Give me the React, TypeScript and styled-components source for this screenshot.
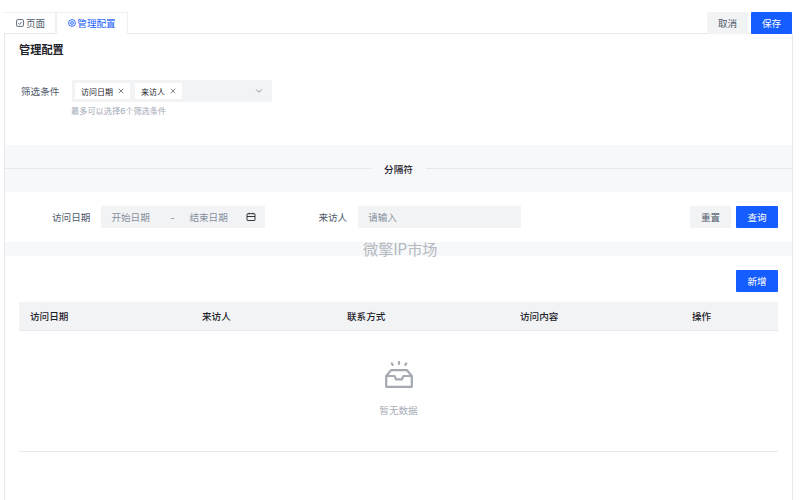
import React from "react";
import styled, { createGlobalStyle } from "styled-components";
import { ChevronDown, X } from "lucide-react";

const GlobalStyle = createGlobalStyle`
  html, body {
    margin: 0;
    padding: 0;
    background: #fff;
  }
  body {
    font-family: "Inter", "Noto Sans CJK SC", sans-serif;
    font-size: 9.6px;
    color: #1d2129;
  }
  * {
    box-sizing: border-box;
  }
`;

const PageWrapper = styled.div`
  position: relative;
  width: 799px;
  height: 500px;
  padding: 12px 6px 0 4px;
  overflow: hidden;
`;

const TopBar = styled.div`
  display: flex;
  justify-content: space-between;
  height: 22px;
  border-bottom: 1px solid #e5e8ef;
`;

const Tabs = styled.div`
  display: flex;
`;

const Tab = styled.div<{ $active?: boolean; $width: number }>`
  display: flex;
  align-items: center;
  justify-content: center;
  gap: ${({ $active }) => ($active ? "1px" : "2px")};
  width: ${({ $width }) => $width}px;
  height: ${({ $active }) => ($active ? "22px" : "21px")};
  padding: 0 0 ${({ $active }) => ($active ? "2px" : "1px")}
    ${({ $active }) => ($active ? "0" : "2px")};
  color: ${({ $active }) => ($active ? "#165dff" : "#4e5969")};
  background: #fff;
  border: 1px solid #eef0f4;
  border-left: ${({ $active }) => ($active ? "1px solid #eef0f4" : "none")};
  border-bottom: none;
`;

const TopActions = styled.div`
  display: flex;
  gap: 3px;
  margin-right: 1px;
`;

const Button = styled.button<{ $primary?: boolean; $width?: number }>`
  width: ${({ $width }) => $width ?? 42}px;
  height: 22px;
  padding: 0 0 1px;
  border: none;
  border-radius: 1px;
  font-family: inherit;
  font-size: 9.6px;
  color: ${({ $primary }) => ($primary ? "#fff" : "#4e5969")};
  background: ${({ $primary }) => ($primary ? "#165dff" : "#f2f3f5")};
`;

const Panel = styled.div`
  height: 467px;
  border-left: 1px solid #e5e8ef;
  border-right: 1px solid #e5e8ef;
`;

const ConfigSection = styled.section`
  height: 111px;
  padding: 8px 14px 0;
`;

const Title = styled.h2`
  margin: 0;
  font-size: 11.2px;
  line-height: 16px;
  font-weight: 600;
`;

const FilterRow = styled.div`
  display: flex;
  align-items: center;
  margin-top: 22px;
  padding-left: 2px;
`;

const FilterLabel = styled.label`
  width: 51px;
  color: #4e5969;
`;

const Select = styled.div`
  display: flex;
  align-items: center;
  gap: 5px;
  width: 200px;
  height: 22px;
  padding: 0 8px 0 3px;
  background: #f2f3f5;
`;

const Tag = styled.span`
  display: flex;
  align-items: center;
  gap: 4px;
  height: 16px;
  padding: 0 5px 0 6px;
  background: #fff;
  font-size: 8px;
`;

const SelectArrow = styled.span`
  display: flex;
  margin-left: auto;
  color: #4e5969;
`;

const Hint = styled.div`
  margin: 2px 0 0 52px;
  font-size: 8.2px;
  line-height: 14px;
  color: #a2a9b5;
`;

const DividerBand = styled.div`
  display: flex;
  align-items: center;
  height: 47px;
  background: #f7f8fa;
`;

const DividerLine = styled.div`
  flex: 1;
  height: 1px;
  background: #e5e8ef;
`;

const DividerText = styled.div`
  padding: 0 13px;
  font-size: 9.6px;
  font-weight: 500;
`;

const SearchRow = styled.div`
  display: flex;
  align-items: center;
  height: 50px;
  padding: 0 14px 0 47px;
`;

const FieldLabel = styled.label`
  color: #4e5969;
  margin-right: 11px;
`;

const DateRange = styled.div`
  display: flex;
  align-items: center;
  width: 164px;
  height: 22px;
  padding: 0 9px 0 10px;
  background: #f2f3f5;
  color: #86909c;
`;

const DateText = styled.span`
  width: 40px;
`;

const DateDash = styled.span`
  width: 38px;
  padding-left: 4px;
  text-align: center;
`;

const CalendarWrap = styled.span`
  display: flex;
  margin-left: auto;
  color: #1d2129;
`;

const PersonField = styled.div`
  display: flex;
  align-items: center;
  margin-left: 53px;
`;

const TextInput = styled.div`
  display: flex;
  align-items: center;
  width: 163px;
  height: 22px;
  padding-left: 10px;
  background: #f2f3f5;
  color: #86909c;
`;

const SearchActions = styled.div`
  display: flex;
  gap: 5px;
  margin-left: auto;
`;

const Band = styled.div`
  height: 14px;
  background: #f7f8fa;
`;

const TableSection = styled.section`
  padding: 14px 14px 0;
`;

const TableActions = styled.div`
  display: flex;
  justify-content: flex-end;
  margin-bottom: 10px;
`;

const TableHead = styled.div`
  display: grid;
  grid-template-columns: 172px 145px 173px 172px 1fr;
  align-items: center;
  height: 29px;
  padding-left: 11px;
  background: #f2f3f5;
  border-bottom: 1px solid #e5e8ef;
  font-weight: 500;
`;

const EmptyState = styled.div`
  display: flex;
  flex-direction: column;
  align-items: center;
  height: 121px;
  padding-top: 30px;
  border-bottom: 1px solid #e5e8ef;
  color: #a9aeb8;
`;

const EmptyText = styled.div`
  margin-top: 16px;
  line-height: 14px;
  color: #a9aeb8;
`;

const Watermark = styled.div`
  position: absolute;
  left: 363px;
  top: 239px;
  font-size: 15.2px;
  line-height: 22px;
  color: #b4b8bf;
  white-space: nowrap;
`;

const PageIcon: React.FC = () => (
  <svg width="8" height="8" viewBox="0 0 8 8" fill="none" stroke="#4e5969" strokeWidth="0.9">
    <rect x="0.6" y="0.6" width="6.8" height="6.8" rx="0.8" />
    <path d="M2.3 4.2 L3.5 5.4 L5.7 2.9" />
  </svg>
);

const GearIcon: React.FC = () => (
  <svg width="8" height="8" viewBox="0 0 8 8" fill="none" stroke="#165dff" strokeWidth="0.9">
    <circle cx="4" cy="4" r="3.4" />
    <circle cx="4" cy="4" r="1.4" />
  </svg>
);

const CalendarIcon: React.FC = () => (
  <svg width="10" height="10" viewBox="0 0 10 10" fill="none" stroke="currentColor" strokeWidth="0.9">
    <rect x="1" y="1.7" width="8" height="6.8" rx="0.5" />
    <path d="M1 4.5 L9 4.5" />
    <path d="M3.2 0.8 L3.2 2.2 M6.8 0.8 L6.8 2.2" />
  </svg>
);

const EmptyIcon: React.FC = () => (
  <svg width="28" height="27" viewBox="0 0 28 27" fill="none" stroke="#a4a9b2" strokeWidth="2.2">
    <path d="M1.2 15 L6 9.2 L22 9.2 L26.8 15 L26.8 25.8 L1.2 25.8 Z" strokeLinejoin="round" />
    <path d="M1.2 15 L9.5 15 L11.2 18.4 L16.8 18.4 L18.5 15 L26.8 15" strokeLinejoin="round" />
    <path d="M6.8 2.4 L7.6 3.8 M14 1 L14 3 M21.2 2.4 L20.4 3.8" strokeLinecap="round" />
  </svg>
);

const columns = ["访问日期", "来访人", "联系方式", "访问内容", "操作"];

const App: React.FC = () => {
  return (
    <PageWrapper>
      <GlobalStyle />
      <TopBar>
        <Tabs>
          <Tab $width={52}>
            <PageIcon />
            页面
          </Tab>
          <Tab $active $width={72}>
            <GearIcon />
            管理配置
          </Tab>
        </Tabs>
        <TopActions>
          <Button $width={41}>取消</Button>
          <Button $primary $width={41}>
            保存
          </Button>
        </TopActions>
      </TopBar>
      <Panel>
        <ConfigSection>
          <Title>管理配置</Title>
          <FilterRow>
            <FilterLabel>筛选条件</FilterLabel>
            <Select>
              <Tag>
                访问日期
                <X size={8} strokeWidth={1.6} />
              </Tag>
              <Tag>
                来访人
                <X size={8} strokeWidth={1.6} />
              </Tag>
              <SelectArrow>
                <ChevronDown size={10} strokeWidth={1.5} />
              </SelectArrow>
            </Select>
          </FilterRow>
          <Hint>最多可以选择6个筛选条件</Hint>
        </ConfigSection>
        <DividerBand>
          <DividerLine />
          <DividerText>分隔符</DividerText>
          <DividerLine />
        </DividerBand>
        <SearchRow>
          <FieldLabel>访问日期</FieldLabel>
          <DateRange>
            <DateText>开始日期</DateText>
            <DateDash>-</DateDash>
            <DateText>结束日期</DateText>
            <CalendarWrap>
              <CalendarIcon />
            </CalendarWrap>
          </DateRange>
          <PersonField>
            <FieldLabel>来访人</FieldLabel>
            <TextInput>请输入</TextInput>
          </PersonField>
          <SearchActions>
            <Button $width={41}>重置</Button>
            <Button $primary>查询</Button>
          </SearchActions>
        </SearchRow>
        <Band />
        <TableSection>
          <TableActions>
            <Button $primary>新增</Button>
          </TableActions>
          <TableHead>
            {columns.map((name) => (
              <div key={name}>{name}</div>
            ))}
          </TableHead>
          <EmptyState>
            <EmptyIcon />
            <EmptyText>暂无数据</EmptyText>
          </EmptyState>
        </TableSection>
      </Panel>
      <Watermark>微擎IP市场</Watermark>
    </PageWrapper>
  );
};

export default App;
